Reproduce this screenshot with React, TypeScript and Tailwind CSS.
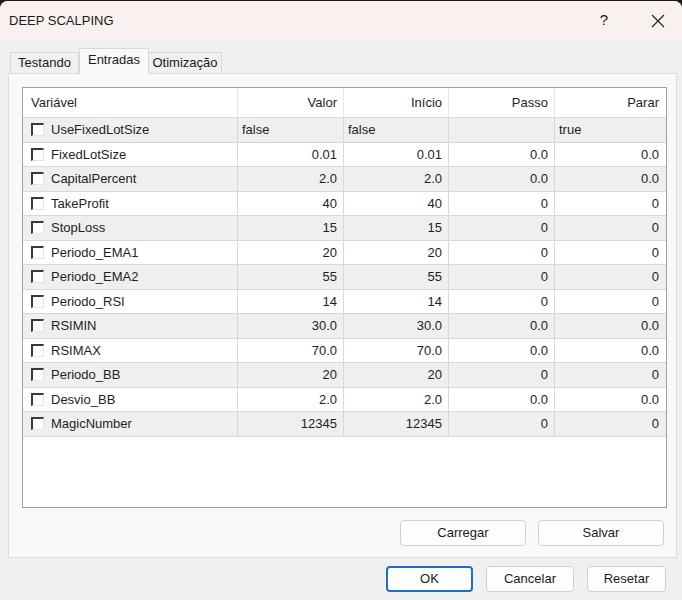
const ROWS: [string, string, string, string, string][] = [
  ["UseFixedLotSize", "false", "false", "", "true"],
  ["FixedLotSize", "0.01", "0.01", "0.0", "0.0"],
  ["CapitalPercent", "2.0", "2.0", "0.0", "0.0"],
  ["TakeProfit", "40", "40", "0", "0"],
  ["StopLoss", "15", "15", "0", "0"],
  ["Periodo_EMA1", "20", "20", "0", "0"],
  ["Periodo_EMA2", "55", "55", "0", "0"],
  ["Periodo_RSI", "14", "14", "0", "0"],
  ["RSIMIN", "30.0", "30.0", "0.0", "0.0"],
  ["RSIMAX", "70.0", "70.0", "0.0", "0.0"],
  ["Periodo_BB", "20", "20", "0", "0"],
  ["Desvio_BB", "2.0", "2.0", "0.0", "0.0"],
  ["MagicNumber", "12345", "12345", "0", "0"],
]

const GRID = "grid grid-cols-[214px_106px_105px_106px_111px]"

function CheckBox() {
  return (
    <span className="block h-[13px] w-[13px] shrink-0 border-t-2 border-l-2 border-t-[#3a3a3a] border-l-[#3a3a3a] border-r border-b border-r-[#e4e4e4] border-b-[#e4e4e4] bg-white" />
  )
}

function Button({ label, primary, w }: { label: string; primary?: boolean; w: string }) {
  return (
    <button
      className={`${w} h-[26px] rounded-[4px] bg-[#fdfdfd] text-[13px] text-[#1b1b1b] ${
        primary ? "border-2 border-[#1f6fc0]" : "border border-[#d0d0d0]"
      }`}
    >
      {label}
    </button>
  )
}

export default function App() {
  return (
    <div className="h-[600px] w-[682px] overflow-hidden bg-[#1c1c1c] pt-[1px] font-['Liberation_Sans',Arial,sans-serif]">
      <div className="flex h-[599px] flex-col rounded-t-[8px] bg-[#f0f0f0]">
        {/* Title bar */}
        <div className="flex h-[39px] items-center rounded-t-[8px] bg-[#f8f1ef] pl-[9px] text-[13px] text-[#1a1a1a]">
          <span className="flex-1">DEEP SCALPING</span>
          <span className="w-[20px] text-center text-[15px]">?</span>
          <span className="ml-[34px] mr-[14px] flex w-[20px] items-center justify-center">
            <svg width="14" height="14" viewBox="0 0 14 14">
              <path d="M1 1L13 13M13 1L1 13" stroke="#222" strokeWidth="1.2" />
            </svg>
          </span>
        </div>

        {/* Tabs */}
        <div className="mt-[8px] flex h-[25px] items-end pl-[10px] text-[13px] text-[#1a1a1a]">
          <div className="flex h-[21px] w-[69px] items-center justify-center border border-b-0 border-[#d9d9d9] bg-[#f0f0f0]">
            Testando
          </div>
          <div className="relative z-10 -mb-px flex h-[26px] w-[70px] items-center justify-center border border-b-0 border-[#d9d9d9] bg-[#f9f9f9] pb-[3px]">
            Entradas
          </div>
          <div className="flex h-[21px] w-[73px] items-center justify-center border border-b-0 border-l-0 border-[#d9d9d9] bg-[#f0f0f0]">
            Otimização
          </div>
        </div>

        {/* Panel */}
        <div className="ml-[8px] mr-[5px] flex h-[485px] flex-col border border-[#dcdcdc] bg-[#f9f9f9] pl-[13px] pr-[10px] pt-[13px]">
          <div className="h-[421px] w-[645px] border border-[#a0a0a0] bg-white text-[13px] text-[#1e1e1e]">
            <div className={`${GRID} h-[30px] border-b border-[#dadada]`}>
              <div className="flex items-center pl-[8px]">Variável</div>
              {["Valor", "Início", "Passo", "Parar"].map((h) => (
                <div key={h} className="flex items-center justify-end border-l border-[#e6e6e6] pr-[6px]">
                  {h}
                </div>
              ))}
            </div>
            {ROWS.map((r, i) => (
              <div
                key={r[0]}
                className={`${GRID} h-[24.5px] border-b border-[#d8d8d8] ${i % 2 === 0 ? "bg-[#efefef]" : "bg-white"}`}
              >
                <div className="flex items-center gap-[7px] pl-[8px]">
                  <CheckBox />
                  <span>{r[0]}</span>
                </div>
                {r.slice(1).map((v, j) => (
                  <div
                    key={j}
                    className={`flex items-center border-l border-[#d8d8d8] ${
                      i === 0 ? "pl-[4px]" : "justify-end pr-[6px]"
                    }`}
                  >
                    {v}
                  </div>
                ))}
              </div>
            ))}
          </div>

          <div className="mt-[12px] flex justify-end gap-[12px] pr-[2px]">
            <Button label="Carregar" w="w-[126px]" />
            <Button label="Salvar" w="w-[126px]" />
          </div>
        </div>

        {/* Footer buttons */}
        <div className="mt-[8px] flex justify-end gap-[13px] pr-[16px]">
          <Button label="OK" primary w="w-[87px]" />
          <Button label="Cancelar" w="w-[88px]" />
          <Button label="Resetar" w="w-[79px]" />
        </div>
      </div>
    </div>
  )
}
